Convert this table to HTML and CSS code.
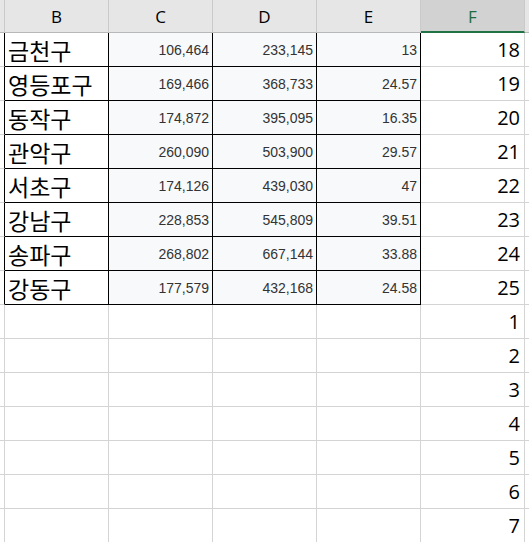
FILE: index.html
```html
<!DOCTYPE html>
<html lang="ko">
<head>
<meta charset="utf-8">
<link rel="stylesheet" href="styles.css">
</head>
<body>
<div class="sheet">
  <div class="hd"></div><div class="hd">B</div><div class="hd">C</div><div class="hd">D</div><div class="hd">E</div><div class="hd sel">F</div><div class="hd last"></div>

  <div class="a edge"></div><div class="c name">금천구</div><div class="c num">106,464</div><div class="c num">233,145</div><div class="c num">13</div><div class="f">18</div><div class="g"></div>
  <div class="a edge"></div><div class="c name">영등포구</div><div class="c num">169,466</div><div class="c num">368,733</div><div class="c num">24.57</div><div class="f">19</div><div class="g"></div>
  <div class="a edge"></div><div class="c name">동작구</div><div class="c num">174,872</div><div class="c num">395,095</div><div class="c num">16.35</div><div class="f">20</div><div class="g"></div>
  <div class="a edge"></div><div class="c name">관악구</div><div class="c num">260,090</div><div class="c num">503,900</div><div class="c num">29.57</div><div class="f">21</div><div class="g"></div>
  <div class="a edge"></div><div class="c name">서초구</div><div class="c num">174,126</div><div class="c num">439,030</div><div class="c num">47</div><div class="f">22</div><div class="g"></div>
  <div class="a edge"></div><div class="c name">강남구</div><div class="c num">228,853</div><div class="c num">545,809</div><div class="c num">39.51</div><div class="f">23</div><div class="g"></div>
  <div class="a edge"></div><div class="c name">송파구</div><div class="c num">268,802</div><div class="c num">667,144</div><div class="c num">33.88</div><div class="f">24</div><div class="g"></div>
  <div class="a edge"></div><div class="c name">강동구</div><div class="c num">177,579</div><div class="c num">432,168</div><div class="c num">24.58</div><div class="f">25</div><div class="g"></div>

  <div class="a"></div><div class="e"></div><div class="e"></div><div class="e"></div><div class="e"></div><div class="f">1</div><div class="g"></div>
  <div class="a"></div><div class="e"></div><div class="e"></div><div class="e"></div><div class="e"></div><div class="f">2</div><div class="g"></div>
  <div class="a"></div><div class="e"></div><div class="e"></div><div class="e"></div><div class="e"></div><div class="f">3</div><div class="g"></div>
  <div class="a"></div><div class="e"></div><div class="e"></div><div class="e"></div><div class="e"></div><div class="f">4</div><div class="g"></div>
  <div class="a"></div><div class="e"></div><div class="e"></div><div class="e"></div><div class="e"></div><div class="f">5</div><div class="g"></div>
  <div class="a"></div><div class="e"></div><div class="e"></div><div class="e"></div><div class="e"></div><div class="f">6</div><div class="g"></div>
  <div class="a"></div><div class="e"></div><div class="e"></div><div class="e"></div><div class="e"></div><div class="f">7</div><div class="g"></div>
</div>
</body>
</html>
```
FILE: styles.css
```css
html, body {
  margin: 0;
  padding: 0;
  background: #ffffff;
  overflow: hidden;
}
.sheet {
  display: grid;
  grid-template-columns: 5px repeat(5, 104px) 1fr;
  grid-template-rows: 33px;
  grid-auto-rows: 34px;
  width: 529px;
}
.sheet > div {
  box-sizing: border-box;
  border-right: 1px solid #d4d4d4;
  border-bottom: 1px solid #d4d4d4;
  display: flex;
  align-items: center;
  min-width: 0;
  overflow: hidden;
  white-space: nowrap;
}
.sheet > .hd {
  background: #e6e6e6;
  border-right-color: #cacaca;
  border-bottom-color: #b8b8b8;
  justify-content: center;
  font-family: "Open Sans", "Noto Sans", sans-serif;
  font-size: 17px;
  color: #000000;
  padding-top: 1px;
}
.sheet > .hd.sel {
  background: #d2d2d2;
  color: #1e6b3d;
  border-bottom: 2px solid #217346;
}
.sheet > .hd.last {
  border-right: none;
}
.sheet > .a.edge {
  border-right-color: #000000;
}
.sheet > .c {
  border-right-color: #000000;
  border-bottom-color: #000000;
}
.name {
  background: #ffffff;
  font-family: "Noto Sans CJK KR", "Malgun Gothic", sans-serif;
  font-size: 23px;
  color: #000000;
  padding-left: 3px;
}
.sheet > .num {
  background: #f8f9fb;
  justify-content: flex-end;
  padding-right: 3px;
  font-family: "Liberation Sans", Arial, sans-serif;
  font-size: 14px;
  color: #333333;
  padding-top: 1px;
}
.sheet > .f {
  justify-content: flex-end;
  padding-right: 4px;
  font-family: "Open Sans", "Noto Sans", sans-serif;
  font-size: 20px;
  color: #000000;
}
.sheet > .g {
  border-right: none;
}
```
